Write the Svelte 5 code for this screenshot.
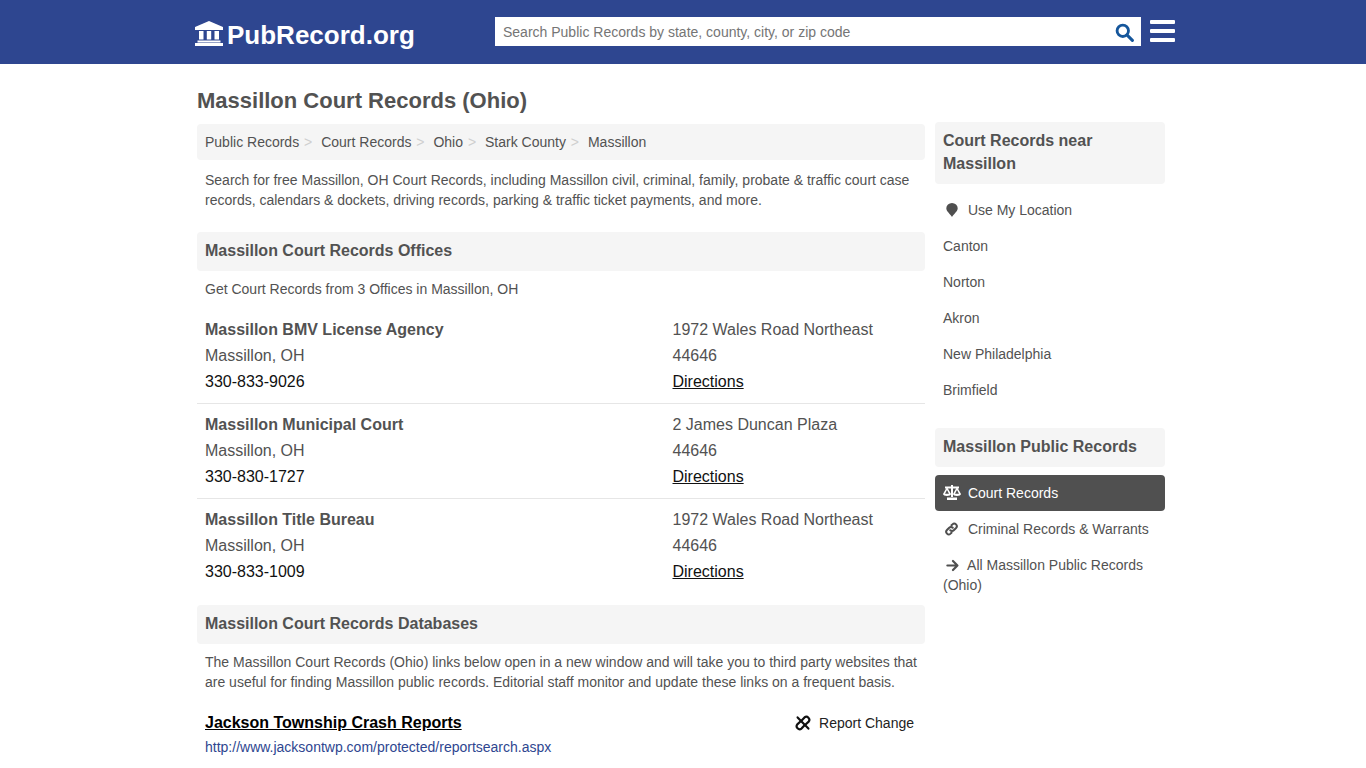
<script>
  const crumbs = ['Public Records', 'Court Records', 'Ohio', 'Stark County', 'Massillon'];
  const offices = [
    { name: 'Massillon BMV License Agency', street: '1972 Wales Road Northeast', phone: '330-833-9026' },
    { name: 'Massillon Municipal Court', street: '2 James Duncan Plaza', phone: '330-830-1727' },
    { name: 'Massillon Title Bureau', street: '1972 Wales Road Northeast', phone: '330-833-1009' }
  ];
  const nearby = ['Canton', 'Norton', 'Akron', 'New Philadelphia', 'Brimfield'];
</script>

<div class="page">
  <header class="top">
    <div class="top-in">
      <a class="logo" href="#top">
        <svg class="logo-icon" viewBox="0 0 28 25" aria-hidden="true">
          <path fill="#fff" d="M14 0 L28 6 V9 H0 V6 Z M4 10 H8.5 V18.5 H4 Z M11.8 10 H16.2 V18.5 H11.8 Z M19.5 10 H24 V18.5 H19.5 Z M2.5 19.5 H25.5 V21.5 H2.5 Z M0 22 H28 V25 H0 Z" />
        </svg>
        <span>PubRecord.org</span>
      </a>
      <form class="search" on:submit|preventDefault>
        <input type="text" placeholder="Search Public Records by state, county, city, or zip code" />
        <svg class="search-icon" viewBox="0 0 20 20" aria-hidden="true">
          <circle cx="8.2" cy="8.2" r="6" fill="none" stroke="#15569b" stroke-width="3" />
          <path d="M12.8 12.8 L18.3 18.3" stroke="#15569b" stroke-width="3.2" stroke-linecap="round" />
        </svg>
      </form>
      <div class="burger"><i></i><i></i><i></i></div>
    </div>
  </header>

  <div class="wrap">
    <main class="main">
      <h1>Massillon Court Records (Ohio)</h1>
      <nav class="crumbs">
        {#each crumbs as c, i}
          <a href="#top">{c}</a>{#if i < crumbs.length - 1}<span class="sep">&gt;</span>{/if}
        {/each}
      </nav>
      <p class="intro">Search for free Massillon, OH Court Records, including Massillon civil, criminal, family, probate &amp; traffic court case records, calendars &amp; dockets, driving records, parking &amp; traffic ticket payments, and more.</p>

      <h2 class="band">Massillon Court Records Offices</h2>
      <p class="sub">Get Court Records from 3 Offices in Massillon, OH</p>
      <div class="offices">
        {#each offices as o}
          <div class="office">
            <div class="col-l">
              <strong>{o.name}</strong>
              <div>Massillon, OH</div>
              <div class="phone">{o.phone}</div>
            </div>
            <div class="col-r">
              <div>{o.street}</div>
              <div>44646</div>
              <a class="dir" href="#top">Directions</a>
            </div>
          </div>
        {/each}
      </div>

      <h2 class="band db">Massillon Court Records Databases</h2>
      <p class="sub2">The Massillon Court Records (Ohio) links below open in a new window and will take you to third party websites that are useful for finding Massillon public records. Editorial staff monitor and update these links on a frequent basis.</p>
      <div class="link-row">
        <a class="link-title" href="#top">Jackson Township Crash Reports</a>
        <span class="report">
          <svg viewBox="0 0 16 16" aria-hidden="true">
            <g fill="none" stroke="#111" stroke-width="2.2" stroke-linecap="round" stroke-linejoin="round">
              <path d="M6.2 6 L9.5 2.4 A3 3 0 0 1 13.7 6.6 L10 10" />
              <path d="M9.8 10 L6.5 13.6 A3 3 0 0 1 2.3 9.4 L6 6" />
              <path d="M2.6 2.4 L13.4 13.6" />
            </g>
          </svg>
          Report Change
        </span>
      </div>
      <a class="url" href="#top">http://www.jacksontwp.com/protected/reportsearch.aspx</a>
    </main>

    <aside class="side">
      <h3 class="side-head tall">Court Records near Massillon</h3>
      <ul class="side-list">
        <li class="loc">
          <svg class="ico pin" viewBox="0 0 12 14" aria-hidden="true">
            <path fill="#4f4f4f" d="M6 14 C4.6 11 .3 8.8 .3 5.2 A5.7 5.2 0 0 1 11.7 5.2 C11.7 8.8 7.4 11 6 14 Z" />
          </svg>
          Use My Location
        </li>
        {#each nearby as n}
          <li>{n}</li>
        {/each}
      </ul>

      <h3 class="side-head">Massillon Public Records</h3>
      <ul class="side-list">
        <li class="active">
          <svg class="ico scale" viewBox="0 0 18 15" aria-hidden="true">
            <g fill="#fff">
              <path d="M8 0 H10 V12 H8 Z M4 12.5 H14 V15 H4 Z M2 1.5 H16 V3.5 H2 Z" />
              <path fill-rule="evenodd" d="M4 2 L0 9 C0 11.6 8 11.6 8 9 Z M4 5 L2 8.8 H6 Z" />
              <path fill-rule="evenodd" d="M14 2 L10 9 C10 11.6 18 11.6 18 9 Z M14 5 L12 8.8 H16 Z" />
            </g>
          </svg>
          Court Records
        </li>
        <li>
          <svg class="ico" viewBox="0 0 16 16" aria-hidden="true">
            <g fill="none" stroke="#4f4f4f" stroke-width="2.3" stroke-linecap="round">
              <path d="M6.6 9.4 A2.8 2.8 0 0 0 10.6 9.4 L13.2 6.8 A2.9 2.9 0 0 0 9.1 2.7 L8 3.8" />
              <path d="M9.4 6.6 A2.8 2.8 0 0 0 5.4 6.6 L2.8 9.2 A2.9 2.9 0 0 0 6.9 13.3 L8 12.2" />
            </g>
          </svg>
          Criminal Records &amp; Warrants
        </li>
        <li class="all">
          <svg class="ico arrow" viewBox="0 0 14 14" aria-hidden="true">
            <path d="M1.5 7 H12 M7.5 2.2 L12.3 7 L7.5 11.8" fill="none" stroke="#4f4f4f" stroke-width="2.4" stroke-linecap="round" stroke-linejoin="round" />
          </svg>
          All Massillon Public Records (Ohio)
        </li>
      </ul>
    </aside>
  </div>
</div>

<style>
  :global(body) {
    margin: 0;
    background: #fff;
    font-family: "Liberation Sans", Arial, sans-serif;
    color: #525252;
  }

  .page {
    height: 768px;
    overflow: hidden;
  }

  .top {
    height: 64px;
    background: #2e4690;
  }

  .top-in {
    width: 980px;
    margin-left: 195px;
    display: flex;
    align-items: flex-start;
  }

  .logo {
    display: flex;
    align-items: center;
    width: 300px;
    height: 64px;
    padding-top: 6px;
    box-sizing: border-box;
    color: #fff;
    text-decoration: none;
    font-size: 26px;
    font-weight: 700;
  }

  .logo-icon {
    width: 28px;
    height: 25px;
    margin-right: 4px;
    margin-top: -4px;
  }

  .search {
    position: relative;
    width: 646px;
    height: 29px;
    margin-top: 17px;
    background: #fff;
  }

  .search input {
    width: 100%;
    height: 100%;
    box-sizing: border-box;
    border: 0;
    padding: 0 40px 0 8px;
    background: transparent;
    font: 14px "Liberation Sans", Arial, sans-serif;
    outline: none;
  }

  .search input::placeholder {
    color: #757575;
    opacity: 1;
  }

  .search-icon {
    position: absolute;
    right: 7px;
    top: 6px;
    width: 19px;
    height: 19px;
  }

  .burger {
    margin: 20px 0 0 9px;
    width: 25px;
    display: flex;
    flex-direction: column;
    gap: 5px;
  }

  .burger i {
    display: block;
    height: 4px;
    background: #fff;
    border-radius: 1px;
  }

  .wrap {
    width: 968px;
    margin-left: 197px;
    display: flex;
    gap: 10px;
  }

  .main {
    width: 728px;
    flex: none;
  }

  h1 {
    margin: 0;
    padding-top: 24px;
    font-size: 22px;
    line-height: 25px;
    font-weight: 700;
  }

  .crumbs {
    margin-top: 11px;
    height: 36px;
    padding: 0 8px;
    display: flex;
    align-items: center;
    background: #f5f5f5;
    border-radius: 4px;
    font-size: 14px;
  }

  .crumbs a {
    color: #525252;
    text-decoration: none;
  }

  .sep {
    width: 22px;
    box-sizing: border-box;
    padding-right: 4px;
    text-align: center;
    font-size: 14px;
    color: #cfcfcf;
  }

  .intro {
    margin: 10px 8px 0;
    font-size: 14px;
    line-height: 20px;
  }

  .band {
    margin: 22px 0 0;
    height: 39px;
    box-sizing: border-box;
    padding: 0 8px 2px;
    display: flex;
    align-items: center;
    background: #f5f5f5;
    border-radius: 4px;
    font-size: 16px;
    font-weight: 700;
  }

  .sub {
    margin: 8px 8px 0;
    font-size: 14px;
    line-height: 20px;
  }

  .offices {
    margin-top: 10px;
  }

  .office {
    display: flex;
    padding: 8px;
    font-size: 16px;
    line-height: 26px;
    border-bottom: 1px solid #e6e6e6;
  }

  .office:last-child {
    border-bottom: 0;
  }

  .office strong {
    display: block;
  }

  .col-l {
    width: 467.5px;
  }

  .phone {
    color: #111;
  }

  .dir {
    color: #111;
    text-decoration: underline;
  }

  .band.db {
    margin-top: 12px;
  }

  .sub2 {
    margin: 8px 8px 0;
    font-size: 14px;
    line-height: 20px;
  }

  .link-row {
    margin: 19px 11px 0 8px;
    height: 24px;
    display: flex;
    justify-content: space-between;
    align-items: center;
  }

  .link-title {
    font-size: 16px;
    font-weight: 700;
    color: #000;
    text-decoration: underline;
  }

  .report {
    display: flex;
    align-items: center;
    font-size: 14px;
    color: #222;
  }

  .report svg {
    width: 16px;
    height: 16px;
    margin-right: 8px;
  }

  .url {
    display: block;
    margin: 2px 8px 0;
    font-size: 14px;
    line-height: 20px;
    color: #2e4690;
    text-decoration: none;
  }

  .side {
    width: 230px;
    flex: none;
    padding-top: 58px;
  }

  .side-head {
    margin: 0;
    padding: 7px 8px 9px;
    background: #f5f5f5;
    border-radius: 4px;
    font-size: 16px;
    line-height: 23px;
    font-weight: 700;
  }

  .side-list {
    list-style: none;
    margin: 8px 0 0;
    padding: 0;
    font-size: 14px;
  }

  .side-list + .side-head {
    margin-top: 20px;
  }

  .side-list li {
    padding: 8px;
    line-height: 20px;
  }

  .active {
    background: #505050;
    color: #fff;
    border-radius: 4px;
  }

  .ico {
    display: inline-block;
    width: 17px;
    height: 14px;
    margin-right: 4px;
    vertical-align: -2px;
  }

  .scale {
    width: 18px;
    height: 15px;
    margin-right: 3px;
  }

  .pin {
    width: 12px;
    height: 14px;
    margin: 0 6px 0 3px;
  }

  .arrow {
    height: 13px;
    margin-left: 1px;
    margin-right: 3px;
  }
</style>
